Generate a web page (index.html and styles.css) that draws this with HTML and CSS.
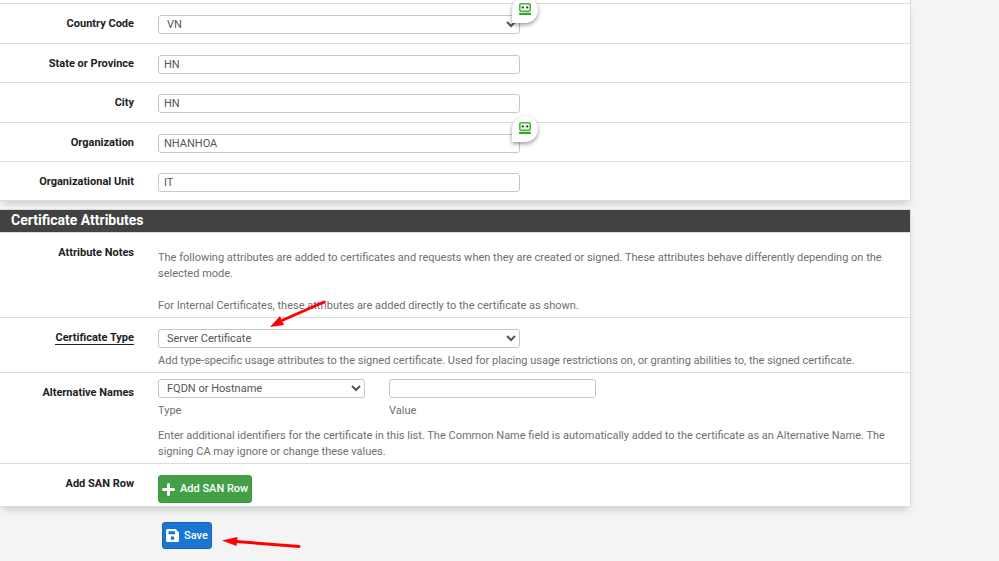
FILE: index.html
```html
<!DOCTYPE html>
<html lang="en">
<head>
<meta charset="utf-8">
<title>Certificate Attributes</title>
<link rel="stylesheet" href="styles.css">
</head>
<body>
<svg class="defs" aria-hidden="true">
  <symbol id="robot" viewBox="0 0 12 12">
    <rect x="0.8" y="0.8" width="10.4" height="7.4" rx="1.2" fill="#f0f4ef" stroke="#45b93d" stroke-width="1.6"/>
    <circle cx="3.8" cy="4.4" r="1.1" fill="#333"/>
    <circle cx="8.2" cy="4.4" r="1.1" fill="#333"/>
    <rect x="0" y="9.8" width="12" height="2.2" rx="0.8" fill="#2fa827"/>
  </symbol>
</svg>
<main class="page">
  <form class="form">
    <section class="panel panel-first">
      <div class="row">
        <label class="label" for="country">Country Code</label>
        <div class="field">
          <div class="control-wrap">
            <select class="control" id="country"><option>VN</option></select>
            <span class="badge"><svg class="badge-icon"><use href="#robot"/></svg></span>
          </div>
        </div>
      </div>
      <div class="row">
        <label class="label" for="state">State or Province</label>
        <div class="field"><div class="control-wrap"><input class="control" id="state" type="text" value="HN"></div></div>
      </div>
      <div class="row">
        <label class="label" for="city">City</label>
        <div class="field"><div class="control-wrap"><input class="control" id="city" type="text" value="HN"></div></div>
      </div>
      <div class="row">
        <label class="label" for="org">Organization</label>
        <div class="field">
          <div class="control-wrap">
            <input class="control" id="org" type="text" value="NHANHOA">
            <span class="badge"><svg class="badge-icon"><use href="#robot"/></svg></span>
          </div>
        </div>
      </div>
      <div class="row">
        <label class="label" for="unit">Organizational Unit</label>
        <div class="field"><div class="control-wrap"><input class="control" id="unit" type="text" value="IT"></div></div>
      </div>
    </section>

    <section class="panel">
      <h2 class="panel-title">Certificate Attributes</h2>
      <div class="row">
        <span class="label">Attribute Notes</span>
        <div class="field">
          <p class="notes">The following attributes are added to certificates and requests when they are created or signed. These attributes behave differently depending on the selected mode.<br><br>For Internal Certificates, these attributes are added directly to the certificate as shown.</p>
        </div>
      </div>
      <div class="row">
        <label class="label" for="type"><span class="required">Certificate Type</span></label>
        <div class="field">
          <div class="control-wrap">
            <select class="control" id="type"><option>Server Certificate</option></select>
            <svg class="arrow" viewBox="0 0 60 32" aria-hidden="true">
              <path d="M55 4 L14 22" stroke="#f00" stroke-width="3" stroke-linecap="round"/>
              <path d="M1 29 L11 18 L15 27 Z" fill="#f00"/>
            </svg>
          </div>
          <p class="help">Add type-specific usage attributes to the signed certificate. Used for placing usage restrictions on, or granting abilities to, the signed certificate.</p>
        </div>
      </div>
      <div class="row row-compact">
        <label class="label" for="san-type">Alternative Names</label>
        <div class="field">
          <div class="pair">
            <div>
              <select class="control" id="san-type"><option>FQDN or Hostname</option></select>
              <label class="help" for="san-type">Type</label>
            </div>
            <div>
              <input class="control" id="san-value" type="text">
              <label class="help" for="san-value">Value</label>
            </div>
          </div>
          <p class="pair-help">Enter additional identifiers for the certificate in this list. The Common Name field is automatically added to the certificate as an Alternative Name. The signing CA may ignore or change these values.</p>
        </div>
      </div>
      <div class="row">
        <span class="label">Add SAN Row</span>
        <div class="field">
          <button class="btn btn-add" type="button">
            <svg class="btn-icon" viewBox="0 0 13 13" aria-hidden="true"><path d="M6.500 1.500v10M1.500 6.500h10" stroke="#fff" stroke-width="3" stroke-linecap="round"/></svg>
            Add SAN Row
          </button>
        </div>
      </div>
    </section>

    <div class="actions">
      <button class="btn btn-save" type="button">
        <svg class="btn-icon" viewBox="0 0 13 13" aria-hidden="true"><path fill="#fff" fill-rule="evenodd" d="M1.500 0H9.500L13 3.500V11.500A1.500 1.500 0 0 1 11.500 13H1.500A1.500 1.500 0 0 1 0 11.500V1.500A1.500 1.500 0 0 1 1.500 0ZM2.500 2.300V5.200H9V2.300ZM6.500 7.200A1.900 1.900 0 1 0 6.500 11A1.900 1.900 0 1 0 6.500 7.200Z"/></svg>
        Save
      </button>
      <svg class="arrow-save" viewBox="0 0 80 14" aria-hidden="true">
        <path d="M77 9.500 L14 4.500" stroke="#f00" stroke-width="3" stroke-linecap="round"/>
        <path d="M0 3.500 L15.500 0 L14.500 9 Z" fill="#f00"/>
      </svg>
    </div>
  </form>
</main>
</body>
</html>
```
FILE: styles.css
```css
* {
  box-sizing: border-box;
}

body {
  margin: 0;
  background: #f4f4f4;
  color: #6f6f6f;
  font: 11px/16px Roboto, "Liberation Sans", sans-serif;
  overflow: hidden;
}

p,
h2 {
  margin: 0;
}

.defs {
  position: absolute;
  width: 0;
  height: 0;
}

.page {
  padding-right: 88px;
}

.panel {
  margin-bottom: 8px;
  background: #fff;
  border: solid #dcdcdc;
  border-width: 1px 1px 1px 0;
  box-shadow: 0 5px 8px -3px rgba(0, 0, 0, 0.2);
}

.panel-first {
  margin-top: 3px;
}

.page::before {
  content: "";
  position: absolute;
  z-index: -1;
  top: 0;
  left: 0;
  right: 88px;
  height: 3px;
  background: #fff;
  border-right: 1px solid #dcdcdc;
}

.panel-title {
  padding: 2px 11px 3px;
  background: #424242;
  border-bottom: 1px solid #dcdcdc;
  color: #fff;
  font-size: 14px;
  line-height: 17px;
  font-weight: 700;
}

.row {
  display: grid;
  grid-template-columns: 134px 1fr;
  column-gap: 24px;
  padding: 11px 12px 3px 0;
  border-bottom: 1px solid #dcdcdc;
}

.panel-first .row {
  padding-bottom: 8px;
}

.panel-first .row:nth-child(odd) {
  padding-bottom: 9px;
}

.panel-first .row:last-child {
  padding-bottom: 8px;
}

.row:last-child {
  border-bottom: 0;
}

.row-compact {
  padding-top: 6px;
}

.label {
  padding-top: 1px;
  text-align: right;
  color: #212121;
  font-weight: 700;
}

.row-compact .label {
  padding-top: 6px;
}

.required {
  border-bottom: 1px solid #212121;
}

.control-wrap {
  position: relative;
  width: 362px;
  max-width: 100%;
}

.control {
  display: block;
  width: 100%;
  height: 19px;
  margin: 0;
  padding: 0 5px;
  background: #fff;
  border: 1px solid #c6c6c6;
  border-radius: 3px;
  color: #555;
  font: inherit;
}

select.control {
  padding: 0 4px;
}

.notes {
  padding-top: 6px;
}

.help {
  display: block;
  padding-top: 5px;
}

.pair {
  display: grid;
  grid-template-columns: 207px 207px;
  column-gap: 24px;
}

.pair-help {
  padding-top: 9px;
}

.badge {
  position: absolute;
  right: -18px;
  top: -18px;
  width: 26px;
  height: 26px;
  padding: 6px 7px;
  background: #fff;
  border-radius: 50% 50% 50% 0;
  box-shadow: 0 2px 4px rgba(0, 0, 0, 0.4);
}

.badge-icon {
  display: block;
  width: 12px;
  height: 12px;
}

.btn {
  display: flex;
  align-items: center;
  gap: 5px;
  height: 28px;
  padding: 0 3px;
  border: 1px solid;
  border-radius: 3px;
  color: #fff;
  font: 500 11px/16px Roboto, "Liberation Sans", sans-serif;
}

.btn-add {
  background: #43a047;
  border-color: #3c9640;
}

.btn-save {
  height: 27px;
  background: #1976d2;
  border-color: #1565b8;
}

.btn-icon {
  width: 13px;
  height: 13px;
}

.actions {
  display: flex;
  gap: 10px;
  padding: 7px 0 0 162px;
}

.arrow {
  position: absolute;
  left: 111px;
  top: -31px;
  width: 60px;
  height: 32px;
}

.arrow-save {
  width: 80px;
  height: 14px;
  margin-top: 15px;
}
```
